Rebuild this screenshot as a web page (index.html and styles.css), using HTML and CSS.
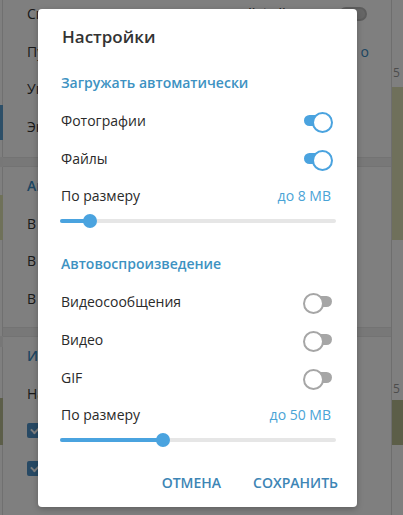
FILE: index.html
```html
<!DOCTYPE html>
<html lang="ru">
<head>
<meta charset="utf-8">
<link rel="stylesheet" href="styles.css">
</head>
<body>
<div class="page">
  <div class="strip-left">
    <div class="sl-blue"></div>
    <div class="sl-sep"></div>
    <div class="sl-green"></div>
    <div class="sl-sep2"></div>
    <div class="sl-green2"></div>
  </div>
  <div class="main">
    <div class="sec first">
      <div class="brow"><span>Спросить куда сохранять каждый файл</span><span class="btoggle"></span></div>
      <div class="brow"><span>Пу</span><span class="bval">о</span></div>
      <div class="brow"><span>Уп</span></div>
      <div class="brow"><span>Эк</span></div>
    </div>
    <div class="bsep"></div>
    <div class="sec">
      <div class="brow bhead"><span>Ав</span></div>
      <div class="brow"><span>В</span></div>
      <div class="brow"><span>В</span></div>
      <div class="brow"><span>В</span></div>
    </div>
    <div class="bsep"></div>
    <div class="sec">
      <div class="brow bhead"><span>Ин</span></div>
      <div class="brow"><span>На</span></div>
      <div class="brow"><span class="bcheck"></span></div>
      <div class="brow"><span class="bcheck"></span></div>
    </div>
  </div>
  <div class="strip-right">
    <div class="sr-num">5</div>
    <div class="sr-green"></div>
    <div class="sr-num2">5</div>
    <div class="sr-green2"></div>
  </div>
</div>
<div class="overlay"></div>
<div class="dialog">
  <div class="title">Настройки</div>
  <div class="head">Загружать автоматически</div>
  <div class="row"><span>Фотографии</span><span class="toggle on"></span></div>
  <div class="row"><span>Файлы</span><span class="toggle on"></span></div>
  <div class="row size"><span>По размеру</span><span class="val">до 8 MB</span></div>
  <div class="slider"><div class="fill" style="width:30px"></div><div class="thumb"></div></div>
  <div class="head second">Автовоспроизведение</div>
  <div class="row"><span>Видеосообщения</span><span class="toggle"></span></div>
  <div class="row"><span>Видео</span><span class="toggle"></span></div>
  <div class="row"><span>GIF</span><span class="toggle"></span></div>
  <div class="row size"><span>По размеру</span><span class="val">до 50 MB</span></div>
  <div class="slider"><div class="fill" style="width:103px"></div><div class="thumb"></div></div>
  <div class="buttons"><span class="btn">ОТМЕНА</span><span class="btn">СОХРАНИТЬ</span></div>
</div>
</body>
</html>
```
FILE: styles.css
```css
* { box-sizing: border-box; }
html, body { margin: 0; padding: 0; }
body {
  width: 403px; height: 515px; overflow: hidden; position: relative;
  font-family: "Open Sans", "Noto Sans", sans-serif;
  background: #fff;
}
.page { display: flex; height: 515px; }
.strip-left { width: 3px; position: relative; background: #fff; border-right: 1px solid #e0e0e0; flex: none; }
.sl-blue { position: absolute; left: 0; top: 105px; width: 3px; height: 35px; background: #5a9fd0; }
.sl-sep { position: absolute; left: 0; top: 157px; width: 3px; height: 10px; background: #efefef; }
.sl-green { position: absolute; left: 0; top: 195px; width: 3px; height: 45px; background: #dfe2b2; }
.sl-sep2 { position: absolute; left: 0; top: 336px; width: 3px; height: 11px; background: #efefef; }
.sl-green2 { position: absolute; left: 0; top: 398px; width: 3px; height: 47px; background: #b9bd92; }
.main { width: 389px; flex: none; background: #fff; border-right: 1px solid #dcdcdc; overflow: hidden; }
.sec { padding-bottom: 10px; }
.sec.first { margin-top: -5px; padding-bottom: 12px; }
.brow { height: 37.5px; display: flex; align-items: center; gap: 8px; padding: 0 24px 0 24px; font-size: 14px; color: #333; white-space: nowrap; }
.brow > span:first-child { flex: none; }
.bhead { color: #3a8cc4; font-weight: 600; }
.btoggle { margin-left: auto; width: 28px; height: 14px; border-radius: 7px; background: #ccc; border: 2px solid #bbb; }
.bval { margin-left: auto; color: #3a8cc4; margin-right: -2px; }
.bcheck { width: 15px; height: 15px; background: #4f93c8; border-radius: 2px; flex: none; position: relative; }
.bcheck::after { content: ""; position: absolute; left: 4px; top: 3px; width: 7px; height: 4px; border-left: 2px solid #fff; border-bottom: 2px solid #fff; transform: rotate(-45deg); }
.bsep { height: 10px; background: #f0f0f0; border-top: 1px solid #e6e6e6; border-bottom: 1px solid #e6e6e6; }
.strip-right { flex: 1; position: relative; background: #fff; }
.sr-num { position: absolute; left: 1px; top: 64px; font-size: 12px; color: #999; }
.sr-green { position: absolute; left: 0; right: 0; top: 87px; height: 153px; background: #dfe1b6; }
.sr-num2 { position: absolute; left: 1px; top: 380px; font-size: 12px; color: #999; }
.sr-green2 { position: absolute; left: 0; right: 0; top: 400px; height: 45px; background: #b9bd90; }
.overlay { position: absolute; inset: 0; background: rgba(0,0,0,0.5); }
.dialog {
  position: absolute; left: 38px; top: 9px; width: 319px; height: 498px;
  background: #fff; border-radius: 4px;
  padding: 16px 22px 9px 23px;
  display: flex; flex-direction: column;
  box-shadow: 0 2px 6px rgba(0,0,0,0.25);
}
.title { height: 24px; line-height: 24px; font-size: 17px; font-weight: 600; color: #333; margin-left: 1px; }
.head { height: 38px; margin-top: 14px; display: flex; align-items: center; font-size: 14px; font-weight: 600; color: #3d92c2; }
.head.second { margin-top: 15px; }
.row { height: 38px; display: flex; align-items: center; justify-content: space-between; font-size: 14px; color: #2a2a2a; }
.row.size { height: 36px; }
.val { color: #4aa3d6; margin-right: 4px; }
.toggle { width: 30px; height: 17px; position: relative; margin-right: 2px; }
.toggle::before { content: ""; position: absolute; left: 1px; right: 1px; top: 3px; height: 11px; border-radius: 6px; background: #a6a6a6; }
.toggle::after { content: ""; position: absolute; left: 0; top: 0; width: 17px; height: 17px; border-radius: 50%; background: #fff; border: 2px solid #a6a6a6; }
.toggle.on::before { background: #4aa3df; }
.toggle.on::after { left: auto; right: 0; border-color: #4aa3df; }
.slider { height: 16px; position: relative; display: flex; align-items: center; margin-left: -1px; margin-right: -1px; }
.slider::before { content: ""; position: absolute; left: 0; right: 0; top: 6px; height: 4px; background: #e6e6e6; border-radius: 2px; }
.fill { position: relative; height: 4px; background: #4aa3df; border-radius: 2px 0 0 2px; }
.thumb { position: relative; width: 14px; height: 14px; margin-left: -7px; border-radius: 50%; background: #4aa3df; }
.buttons { margin-top: 18px; height: 32px; display: flex; justify-content: flex-end; align-items: center; gap: 32px; margin-right: -3px; }
.btn { font-size: 14px; font-weight: 600; color: #3d85b5; }
```
